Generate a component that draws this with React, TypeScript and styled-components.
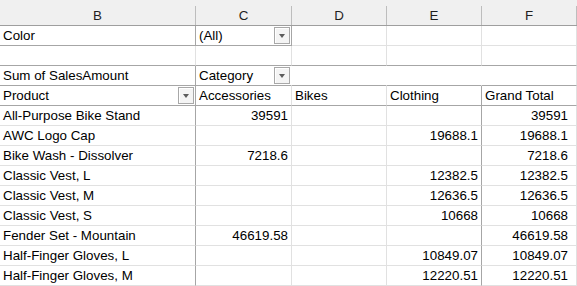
import React from "react";
import styled, { createGlobalStyle } from "styled-components";

const GlobalStyle = createGlobalStyle`
  html, body {
    margin: 0;
    padding: 0;
    background: #ffffff;
  }
  body {
    font-family: "Liberation Sans", Arial, sans-serif;
    overflow: hidden;
  }
`;

type Line = "dark" | "light" | "none";

const lineColor = (l: Line) =>
  l === "dark" ? "#a6a6a6" : l === "light" ? "#e1e1e1" : "transparent";

const COLS = "196px 96px 95px 95px 95px";

const Sheet = styled.div`
  width: 577px;
  height: 286px;
  overflow: hidden;
  font-size: 13.35px;
  color: #000;
  background: #fff;
`;

const HeaderRow = styled.div`
  display: grid;
  grid-template-columns: ${COLS};
  padding-top: 6px;
  height: 26px;
  box-sizing: border-box;
  background: #f0f0f0;
  border-bottom: 1px solid #9e9e9e;
`;

const ColHeader = styled.div`
  display: flex;
  align-items: center;
  justify-content: center;
  border-right: 1px solid #bdbdbd;
  color: #1f1f1f;
  height: 19px;
`;

const Row = styled.div`
  display: grid;
  grid-template-columns: ${COLS};
  height: 20px;
`;

const Cell = styled.div<{
  $right: Line;
  $bottom: Line;
  $align?: "left" | "right";
  $padRight?: number;
}>`
  box-sizing: border-box;
  height: 20px;
  display: flex;
  align-items: center;
  justify-content: ${(p) => (p.$align === "right" ? "flex-end" : "flex-start")};
  padding: 0 ${(p) => p.$padRight ?? 3}px 0 3px;
  border-right: 1px solid ${(p) => lineColor(p.$right)};
  border-bottom: 1px solid ${(p) => lineColor(p.$bottom)};
  white-space: nowrap;
  overflow: visible;
`;

const Label = styled.span`
  flex: 1 1 auto;
  min-width: 0;
`;

const DropButton = styled.span`
  flex: 0 0 auto;
  box-sizing: border-box;
  width: 16px;
  height: 17px;
  margin-right: -2px;
  border: 1px solid #a8a8a8;
  background: #f4f4f4;
  box-shadow: inset 1px 1px 0 #ffffff;
  display: flex;
  align-items: center;
  justify-content: center;
`;

const Arrow = styled.span`
  width: 0;
  height: 0;
  border-left: 3.5px solid transparent;
  border-right: 3.5px solid transparent;
  border-top: 4px solid #5c5c5c;
  margin-top: 1px;
`;

const Drop = () => (
  <DropButton>
    <Arrow />
  </DropButton>
);

const rows: string[][] = [
  ["All-Purpose Bike Stand", "39591", "", "", "39591"],
  ["AWC Logo Cap", "", "", "19688.1", "19688.1"],
  ["Bike Wash - Dissolver", "7218.6", "", "", "7218.6"],
  ["Classic Vest, L", "", "", "12382.5", "12382.5"],
  ["Classic Vest, M", "", "", "12636.5", "12636.5"],
  ["Classic Vest, S", "", "", "10668", "10668"],
  ["Fender Set - Mountain", "46619.58", "", "", "46619.58"],
  ["Half-Finger Gloves, L", "", "", "10849.07", "10849.07"],
  ["Half-Finger Gloves, M", "", "", "12220.51", "12220.51"],
];

const dataRight: Line[] = ["dark", "light", "light", "dark", "dark"];

export default function App() {
  return (
    <>
      <GlobalStyle />
      <Sheet>
        <HeaderRow>
          {["B", "C", "D", "E", "F"].map((c) => (
            <ColHeader key={c}>{c}</ColHeader>
          ))}
        </HeaderRow>

        <Row>
          <Cell $right="dark" $bottom="dark">
            <Label>Color</Label>
          </Cell>
          <Cell $right="dark" $bottom="dark">
            <Label>(All)</Label>
            <Drop />
          </Cell>
          <Cell $right="light" $bottom="light" />
          <Cell $right="light" $bottom="light" />
          <Cell $right="light" $bottom="light" />
        </Row>

        <Row>
          <Cell $right="light" $bottom="dark" />
          <Cell $right="light" $bottom="dark" />
          <Cell $right="light" $bottom="dark" />
          <Cell $right="light" $bottom="dark" />
          <Cell $right="light" $bottom="dark" />
        </Row>

        <Row>
          <Cell $right="dark" $bottom="dark">
            <Label>Sum of SalesAmount</Label>
          </Cell>
          <Cell $right="none" $bottom="dark">
            <Label>Category</Label>
            <Drop />
          </Cell>
          <Cell $right="none" $bottom="dark" />
          <Cell $right="none" $bottom="dark" />
          <Cell $right="light" $bottom="dark" />
        </Row>

        <Row>
          <Cell $right="dark" $bottom="dark">
            <Label>Product</Label>
            <Drop />
          </Cell>
          <Cell $right="light" $bottom="dark">
            <Label>Accessories</Label>
          </Cell>
          <Cell $right="light" $bottom="dark">
            <Label>Bikes</Label>
          </Cell>
          <Cell $right="dark" $bottom="dark">
            <Label>Clothing</Label>
          </Cell>
          <Cell $right="light" $bottom="dark">
            <Label>Grand Total</Label>
          </Cell>
        </Row>

        {rows.map((r) => (
          <Row key={r[0]}>
            {r.map((v, i) => (
              <Cell
                key={i}
                $right={i === 4 ? "light" : dataRight[i]}
                $bottom="light"
                $align={i === 0 ? "left" : "right"}
                $padRight={i === 4 ? 8 : 3}
              >
                {v}
              </Cell>
            ))}
          </Row>
        ))}
      </Sheet>
    </>
  );
}
